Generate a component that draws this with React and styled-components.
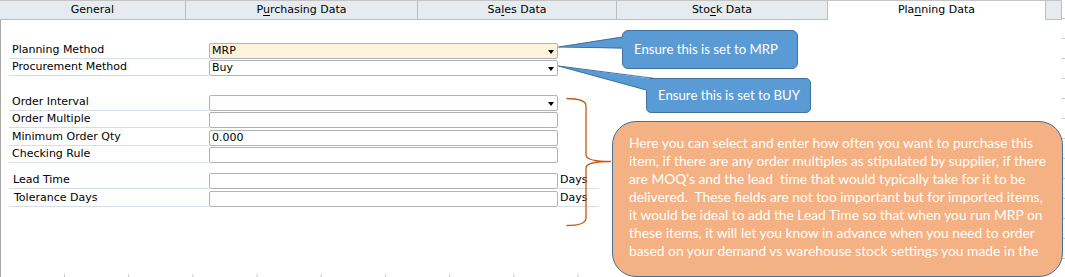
import React from 'react';
import styled, { createGlobalStyle } from 'styled-components';

const GlobalStyle = createGlobalStyle`
  html, body { margin: 0; padding: 0; background: #fff; }
  body { font-family: "DejaVu Sans", Tahoma, sans-serif; color: #000; }
`;

const Screen = styled.div`
  position: relative;
  width: 1065px;
  height: 277px;
  overflow: hidden;
  background-color: #fff;
  background-image:
    linear-gradient(to bottom, #c8c8c8 0 1px, transparent 1px),
    linear-gradient(to right, #c8c8c8 0 1px, transparent 1px);
  background-size: 3px 20px, 64.2px 3px;
  background-position: right 0 top 18px, left 64px bottom 0;
  background-repeat: repeat-y, repeat-x;
`;

const TabBar = styled.div`
  display: flex;
  height: 20px;
  box-sizing: border-box;
  border-top: 1px solid #c4c4c4;
  width: 1062px;
`;

const Tab = styled.div`
  width: ${(p) => p.$w}px;
  flex: none;
  box-sizing: border-box;
  background: ${(p) => (p.$active ? '#ffffff' : '#e6ebf0')};
  border-right: 1px solid #bdbdbd;
  border-bottom: 1px solid ${(p) => (p.$active ? '#ffffff' : '#bdbdbd')};
  display: flex;
  align-items: center;
  justify-content: center;
  font-size: 11px;
  line-height: 14px;
  white-space: nowrap;
  u { text-decoration-thickness: 1px; text-underline-offset: 2px; }
`;

const Body = styled.div`
  height: 257px;
  box-sizing: border-box;
  border-left: 1px solid #a8a8a8;
  padding: 21px 0 0 8px;
`;

const Group = styled.div`
  display: flex;
  flex-direction: column;
  margin-top: ${(p) => p.$gap || 0}px;
`;

const Row = styled.div`
  display: grid;
  grid-template-columns: 200px 349px ${(p) => (p.$unit ? '41px' : '0px')};
  height: ${(p) => p.$h || 17.5}px;
`;

const Label = styled.div`
  box-sizing: border-box;
  border-bottom: 1px solid #d6dde5;
  font-size: 11px;
  line-height: 14px;
  display: flex;
  align-items: flex-end;
  padding: 0 0 1px ${(p) => 3 + (p.$indent || 0)}px;
  white-space: nowrap;
`;

const Field = styled.div`
  position: relative;
  align-self: end;
  height: 16px;
  box-sizing: border-box;
  border: 1px solid #aeb3b9;
  border-radius: 2px;
  background: ${(p) => (p.$highlight ? '#fdf2dc' : '#ffffff')};
  font-size: 11px;
  line-height: 14px;
  padding-left: 2px;
  display: flex;
  align-items: center;
`;

const Arrow = styled.span`
  position: absolute;
  right: 3px;
  top: 6px;
  width: 0;
  height: 0;
  border-left: 3.5px solid transparent;
  border-right: 3.5px solid transparent;
  border-top: 4px solid #000;
`;

const Unit = styled.div`
  box-sizing: border-box;
  border-bottom: 1px solid #d6dde5;
  font-size: 11px;
  line-height: 14px;
  display: flex;
  align-items: flex-end;
  padding: 0 0 1px 2px;
`;

const Callout = styled.div`
  position: absolute;
  left: ${(p) => p.$x}px;
  top: ${(p) => p.$y}px;
  width: ${(p) => p.$w}px;
  height: ${(p) => p.$h}px;
  box-sizing: border-box;
  background: ${(p) => p.$bg};
  border: 1px solid #41719c;
  border-radius: ${(p) => p.$r}px;
  color: #fff;
  font-family: Lato, "Open Sans", sans-serif;
  font-size: ${(p) => p.$fs}px;
  padding: ${(p) => p.$pad};
  display: flex;
  flex-direction: column;
  justify-content: ${(p) => (p.$top ? 'flex-start' : 'center')};
  overflow: hidden;
  white-space: nowrap;
`;

const NoteLine = styled.div`
  white-space: pre;
  line-height: 18px;
  height: 18px;
`;

const Overlay = styled.svg`
  position: absolute;
  left: 0;
  top: 0;
  pointer-events: none;
`;

const tabs = [
  { w: 186, label: 'General' },
  { w: 232, label: <>P<u>u</u>rchasing Data</> },
  { w: 199, label: <>Sa<u>l</u>es Data</> },
  { w: 211, label: <>Sto<u>c</u>k Data</> },
  { w: 218, label: <>Pla<u>n</u>ning Data</>, active: true },
  { w: 16, label: '' },
];

const noteLines = [
  'Here you can select and enter how often you want to purchase this',
  'item, if there are any order multiples as stipulated by supplier, if there',
  "are MOQ's and the lead  time that would typically take for it to be",
  'delivered.  These fields are not too important but for imported items,',
  'it would be ideal to add the Lead Time so that when you run MRP on',
  'these items, it will let you know in advance when you need to order',
  'based on your demand vs warehouse stock settings you made in the',
];

function FormRow({ label, value, dropdown, highlight, unit, indent, h }) {
  return (
    <Row $unit={!!unit} $h={h}>
      <Label $indent={indent}>{label}</Label>
      <Field $highlight={highlight}>
        {value}
        {dropdown && <Arrow />}
      </Field>
      {unit ? <Unit>{unit}</Unit> : <span />}
    </Row>
  );
}

export default function App() {
  return (
    <>
      <GlobalStyle />
      <Screen>
        <TabBar>
          {tabs.map((t, i) => (
            <Tab key={i} $w={t.w} $active={t.active}>
              {t.label}
            </Tab>
          ))}
        </TabBar>
        <Body>
          <Group>
            <FormRow label="Planning Method" value="MRP" dropdown highlight />
            <FormRow label="Procurement Method" value="Buy" dropdown />
          </Group>
          <Group $gap={17}>
            <FormRow label="Order Interval" dropdown />
            <FormRow label="Order Multiple" />
            <FormRow label="Minimum Order Qty" value="0.000" />
            <FormRow label="Checking Rule" />
          </Group>
          <Group $gap={7.5}>
            <FormRow label="Lead Time" unit="Days" indent={1} h={18} />
            <FormRow label="Tolerance Days" unit="Days" indent={2} h={18} />
          </Group>
        </Body>

        <Callout $x={622} $y={30} $w={176} $h={39} $r={6} $bg="#5b9bd5" $fs={13.2} $pad="0 0 2px 11px">
          Ensure this is set to MRP
        </Callout>
        <Callout $x={646} $y={78} $w={165} $h={35} $r={5} $bg="#5b9bd5" $fs={13.2} $pad="0 0 2px 11px">
          Ensure this is set to BUY
        </Callout>
        <Callout $x={612} $y={121} $w={451} $h={156} $r={24} $bg="#f4b183" $fs={13.8} $pad="12px 0 0 16px" $top>
          {noteLines.map((l, i) => (
            <NoteLine key={i}>{l}</NoteLine>
          ))}
        </Callout>

        <Overlay width="1065" height="277" viewBox="0 0 1065 277">
          <polygon points="558,47 624,36.5 624,48.5" fill="#5b9bd5" />
          <polyline points="622.5,37 558.5,47 622.5,48" fill="none" stroke="#41719c" strokeWidth="1" />
          <polygon points="558,66 649,78.5 649,91" fill="#5b9bd5" />
          <polyline points="655,78.5 558.5,66 646.5,90" fill="none" stroke="#41719c" strokeWidth="1" />
          <path
            d="M566.5 98.5 Q586 98.5 586 106 L586 155 Q586 161.5 611 161.5 Q586 161.5 586 168 L586 218 Q586 225.5 566.5 225.5"
            fill="none"
            stroke="#c55a11"
            strokeWidth="1.3"
          />
        </Overlay>
      </Screen>
    </>
  );
}
